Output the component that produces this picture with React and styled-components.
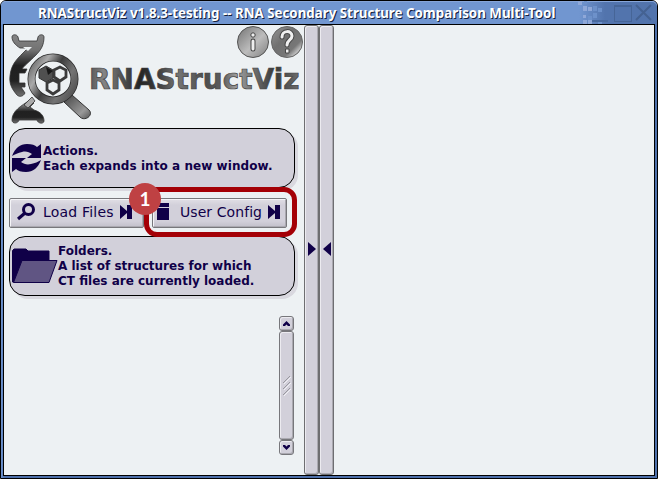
import React from 'react';
import styled, { createGlobalStyle } from 'styled-components';

const INK = '#100048';
const FACE = '#d2d0da';
const PAPER = '#edf1f3';

const GlobalStyle = createGlobalStyle`
  * { box-sizing: border-box; }
  body { margin: 0; background: #fff; overflow: hidden; }
  svg { display: block; flex: none; }
`;

const Window = styled.div`
  width: 658px;
  height: 479px;
  display: flex;
  flex-direction: column;
  padding: 0 2px 2px;
  border: 1px solid #000;
  border-radius: 6px 6px 0 0;
  background: linear-gradient(90deg, #6f94cf 0, #4e70aa 4px, #4e70aa 100%);
  font-family: 'DejaVu Sans', sans-serif;
  color: ${INK};
`;

const TitleBar = styled.header`
  height: 23px;
  flex: none;
  margin: 0 -2px;
  padding-left: 37px;
  display: flex;
  justify-content: space-between;
  border-radius: 5px 5px 0 0;
  background: linear-gradient(90deg, #7196d0 0 578px, #5274ad 604px);
  box-shadow: inset 0 1px #86a5d8;
`;

const Title = styled.h1`
  width: 530px;
  margin: 0;
  font: 700 13.33px/24px 'Noto Sans', sans-serif;
  color: #fff;
  white-space: nowrap;
  text-shadow: 1px 1px #14203c;
`;

const Body = styled.main`
  flex: 1;
  display: flex;
  border: 1px solid #000;
  background: ${PAPER};
`;

const Sidebar = styled.section`
  width: 300px;
  flex: none;
  display: flex;
  flex-direction: column;
  padding-left: 5px;
`;

const Brand = styled.div`
  height: 103px;
  margin-left: -5px;
`;

const Card = styled.div`
  width: 286px;
  height: 60px;
  flex: none;
  display: flex;
  align-items: center;
  gap: ${p => p.$gap || 0};
  padding-left: ${p => p.$inset};
  border: 1px solid #000;
  border-radius: 16px;
  background: ${FACE};
  box-shadow: 3px 3px #d9d8df;
`;

const CardText = styled.p`
  margin: 0;
  padding-top: ${p => p.$drop || 0};
  letter-spacing: ${p => p.$spacing || 0};
  font-weight: bold;
  font-size: 12px;
  line-height: 15px;
  white-space: pre;
`;

const Actions = styled.div`
  position: relative;
  height: 48px;
  flex: none;
  display: flex;
  align-items: center;
  gap: 8px;
  padding-top: 1px;
`;

const Button = styled.button`
  width: 135px;
  height: 30px;
  display: flex;
  align-items: center;
  padding: 0 0 2px ${p => p.$inset};
  border: 1px solid #77777b;
  border-radius: 2px;
  background: linear-gradient(#e1dfe6, ${FACE} 6px 22px, #c2c0ca);
  box-shadow: inset 1px 1px #f4f4f7, inset -1px -1px #aaa9b0;
  font: 14px 'DejaVu Sans', sans-serif;
  color: ${INK};
  text-align: left;
  white-space: nowrap;
`;

const ButtonLabel = styled.span`
  width: ${p => p.$width};
  margin-left: ${p => p.$lead};
  letter-spacing: ${p => p.$spacing};
`;

const Highlight = styled.div`
  position: absolute;
  left: 135px;
  top: -1px;
  width: 153px;
  height: 50px;
  border: 5px solid #a40006;
  border-radius: 13px;
  z-index: 1;
`;

const Badge = styled.div`
  position: absolute;
  left: 120px;
  top: -5px;
  width: 32px;
  height: 32px;
  border-radius: 50%;
  background: #bf4143;
  color: #fff;
  font: bold 19px/32px Lato, sans-serif;
  text-align: center;
  z-index: 2;
`;

const ScrollBar = styled.div`
  width: 15px;
  height: 139px;
  margin: 20px 0 0 270px;
  display: flex;
  flex-direction: column;
`;

const Bevel = styled.div`
  display: flex;
  align-items: center;
  justify-content: center;
  border: 1px solid #77777b;
  border-radius: 3px;
  background: ${FACE};
  box-shadow: inset 1px 1px #ecebf0, inset -1px -1px #aaa9b0;
`;

const ScrollButton = styled(Bevel)`
  height: 15px;
`;

const Thumb = styled(Bevel)`
  flex: 1;
`;

const Splitter = styled(Bevel)`
  width: 15px;
  flex: none;
  padding-bottom: 2px;
  border-color: #6e6e71;
`;

const WindowControls = () => (
  <svg width="80" height="23" viewBox="577 1 80 23" shapeRendering="crispEdges">
    <g fill="#8fa8d8">
      <path d="M578 1h4v4h-4zM583 6h4v5h-4zM588 7h4v4h-4zM583 15h3v3h-3zM583 20h4v4h-4zM588 20h4v4h-4z" />
    </g>
    <g fill="#6d91ca">
      <path d="M584 1h3v3h-3zM593 6h4v5h-4zM598 8h4v4h-4zM593 13h4v5h-4zM588 16h4v4h-4zM598 21h4v3h-4z" />
    </g>
    <path fill="#496a9f" d="M592 20h16v2h-16z" />
    <path d="M614 5h17v16h-17z" fill="none" stroke="#466597" />
    <path d="M614 5h17v2h-17z" fill="#466597" />
    <path d="M636 5l15 15M651 5l-15 15" stroke="#446292" strokeWidth="2" shapeRendering="auto" />
  </svg>
);

const BrandArt = () => (
  <svg width="300" height="103" viewBox="4 25 300 103">
    <defs>
      <linearGradient id="strand" x1="0" y1="0" x2="0" y2="1">
        <stop offset="0" stopColor="#858585" />
        <stop offset=".25" stopColor="#727272" />
        <stop offset=".5" stopColor="#202020" />
        <stop offset=".75" stopColor="#222" />
        <stop offset="1" stopColor="#727272" />
      </linearGradient>
      <linearGradient id="lens" x1="0" y1=".2" x2="1" y2=".8">
        <stop offset="0" stopColor="#777" />
        <stop offset=".2" stopColor="#aaa" />
        <stop offset=".45" stopColor="#3e3e3e" />
        <stop offset=".75" stopColor="#747474" />
        <stop offset="1" stopColor="#555" />
      </linearGradient>
      <linearGradient id="handle" x1="0" y1="0" x2="1" y2="1">
        <stop offset="0" stopColor="#444" />
        <stop offset=".7" stopColor="#999" />
        <stop offset="1" stopColor="#555" />
      </linearGradient>
      <linearGradient id="word" gradientUnits="userSpaceOnUse" x1="89" y1="0" x2="300" y2="0">
        <stop offset="0" stopColor="#555" />
        <stop offset=".07" stopColor="#858585" />
        <stop offset=".16" stopColor="#505050" />
        <stop offset=".24" stopColor="#252525" />
        <stop offset=".32" stopColor="#383838" />
        <stop offset=".42" stopColor="#757575" />
        <stop offset=".55" stopColor="#4c4c4c" />
        <stop offset=".64" stopColor="#606060" />
        <stop offset=".7" stopColor="#a0a0a0" />
        <stop offset=".78" stopColor="#707070" />
        <stop offset=".88" stopColor="#383838" />
        <stop offset="1" stopColor="#707070" />
      </linearGradient>
      <linearGradient id="info" x1="0" y1="0" x2="1" y2="1">
        <stop offset="0" stopColor="#737373" />
        <stop offset=".55" stopColor="#bcbcbc" />
        <stop offset="1" stopColor="#808080" />
      </linearGradient>
      <linearGradient id="help" x1="0" y1="0" x2="1" y2="1">
        <stop offset="0" stopColor="#969696" />
        <stop offset=".4" stopColor="#707070" />
        <stop offset=".7" stopColor="#777" />
        <stop offset=".82" stopColor="#bdbdbd" />
        <stop offset="1" stopColor="#777" />
      </linearGradient>
    </defs>
    <g fill="url(#strand)" stroke="#333" strokeWidth=".8">
      <path d="M12 37c0-3 5-3 6 0l1 4h18l1-4c1-3 6-3 6 0 0 8-3 13-8 18-7 7-12 11-14 14h5l-2 4h-6v10h6v4h-4l4 6c-2 4-6 4-8 2-5-6-8-11-7-19 1-11 6-16 13-23l5-5h-8c-5-3-8-7-8-11z" />
      <path d="M30 100l4 3-4 4 4 3c7 2 10 6 10 11 0 3-6 3-7-1H19c-1 4-7 4-7 0 0-9 9-14 18-20z" />
      <path d="M24 105l8-8 3 4-7 7z" fill="#aaa" />
    </g>
    <path d="M23 47h9l-4 4z" fill={PAPER} />
    <path d="M64 102l8-7 17 15c5 5-4 12-9 7z" fill="url(#handle)" stroke="#333" />
    <circle cx="53" cy="79" r="21.5" fill={PAPER} stroke="#2b2b2b" strokeWidth="8" />
    <circle cx="53" cy="79" r="21.5" fill="none" stroke="url(#lens)" strokeWidth="6.5" />
    <path d="M39 70l7-4 7 4v8l-7 4-7-4z" fill="#505050" stroke="#333" />
    <path d="M54 70l6-3 6 3v7l-6 4-6-4zM47 83l6-3 6 3v7l-6 4-6-4z" fill={PAPER} stroke="#3b3b3b" strokeWidth="2.8" />
    <path d="M46 67l7 4-5 4z" fill="#181818" />
    <text x="89" y="88.5" textLength="210.500" lengthAdjust="spacingAndGlyphs" fontFamily="DejaVu Sans" fontWeight="bold" fontSize="28" fill="url(#word)" stroke="#444" strokeWidth=".7">RNAStructViz</text>
    <circle cx="253" cy="42" r="15.5" fill="url(#info)" stroke="#555" />
    <circle cx="287" cy="42" r="15.5" fill="url(#help)" stroke="#666" />
    <path d="M253 41v8" stroke="#444" strokeWidth="5" strokeLinecap="round" />
    <path d="M253 41v8" stroke="#eee" strokeWidth="3" strokeLinecap="round" />
    <circle cx="253" cy="35" r="2.2" fill="#eee" stroke="#444" />
    <path d="M282 37c0-7 10-7 10-1 0 4-5 4-5 9" fill="none" stroke="#484848" strokeWidth="5" strokeLinecap="round" />
    <path d="M282 37c0-7 10-7 10-1 0 4-5 4-5 9" fill="none" stroke="#f0f0f0" strokeWidth="3" strokeLinecap="round" />
    <path d="M285.500 49h3.500v4h-3.500z" fill="#eee" stroke="#484848" />
  </svg>
);

const RefreshIcon = () => (
  <svg width="31" height="30" viewBox="0 0 31 30" fill={INK}>
    <path d="M1 13C4 5 9 1 16 1c5 0 8 1 10 3l4-3v14H16l5-4c-3-2-6-3-10-2-4 1-7 2-10 4z" />
    <path d="M30 17c-3 8-8 12-15 12-5 0-8-1-10-3l-4 3V15h14l-5 4c3 2 6 3 10 2 4-1 7-2 10-4z" />
  </svg>
);

const FolderIcon = () => (
  <svg width="46" height="36" viewBox="0 0 46 36" stroke={INK}>
    <path d="M.5 34V2.500L2 1h12l2 2h21v10H13L2 34z" fill={INK} />
    <path d="M10 12.500h35L37 34.500H1.500z" fill="#605583" />
  </svg>
);

const SearchIcon = () => (
  <svg width="18" height="18" viewBox="0 0 18 18" fill="none" stroke={INK}>
    <circle cx="11.500" cy="6.500" r="5" strokeWidth="3" />
    <path d="M8 10l-7 6" strokeWidth="3.2" />
  </svg>
);

const PanelIcon = () => (
  <svg width="12" height="17" viewBox="0 0 12 17" fill={INK}>
    <path d="M0 0h12v4H0zM0 5h12v12H0z" />
  </svg>
);

const SkipIcon = () => (
  <svg width="12" height="14" viewBox="0 0 12 14" fill={INK}>
    <path d="M0 0l7 6V0h5v14H7V8l-7 6z" />
  </svg>
);

const Chevron = ({ down }) => (
  <svg width="7" height="5" viewBox="0 0 7 5" fill={INK}>
    <path d={down ? 'M0 0h2l1.500 1.500L5 0h2v1.500L3.500 5 0 1.500z' : 'M0 5h2l1.500-1.500L5 5h2V3.500L3.500 0 0 3.500z'} />
  </svg>
);

const Grip = () => (
  <svg width="9" height="20" viewBox="0 0 9 20" fill="none">
    <path d="M2 8l7-7M2 14l7-7M2 20l7-7" stroke="#f0eff4" />
    <path d="M1 7l7-7M1 13l7-7M1 19l7-7" stroke="#98979e" />
  </svg>
);

const Arrow = ({ left }) => (
  <svg width="8" height="14" viewBox="0 0 8 14" fill={INK}>
    <path d={left ? 'M8 0v14L0 7z' : 'M0 0v14l8-7z'} />
  </svg>
);

export default function App() {
  return (
    <>
      <GlobalStyle />
      <Window>
        <TitleBar>
          <Title>RNAStructViz v1.8.3-testing -- RNA Secondary Structure Comparison Multi-Tool</Title>
          <WindowControls />
        </TitleBar>
        <Body>
          <Sidebar>
            <Brand><BrandArt /></Brand>
            <Card $inset="1px" $gap="1px">
              <RefreshIcon />
              <CardText $drop="2px" $spacing="0.06px">{'Actions.\nEach expands into a new window.'}</CardText>
            </Card>
            <Actions>
              <Button $inset="7px">
                <SearchIcon />
                <ButtonLabel $lead="8px" $width="77px" $spacing="0.2px">Load Files</ButtonLabel>
                <SkipIcon />
              </Button>
              <Button $inset="4px">
                <PanelIcon />
                <ButtonLabel $lead="11px" $width="88px" $spacing="0.07px">User Config</ButtonLabel>
                <SkipIcon />
              </Button>
              <Highlight />
              <Badge>1</Badge>
            </Actions>
            <Card $inset="2px">
              <FolderIcon />
              <CardText>{'Folders.\nA list of structures for which\nCT files are currently loaded.'}</CardText>
            </Card>
            <ScrollBar>
              <ScrollButton><Chevron /></ScrollButton>
              <Thumb><Grip /></Thumb>
              <ScrollButton><Chevron down /></ScrollButton>
            </ScrollBar>
          </Sidebar>
          <Splitter><Arrow /></Splitter>
          <Splitter><Arrow left /></Splitter>
        </Body>
      </Window>
    </>
  );
}
